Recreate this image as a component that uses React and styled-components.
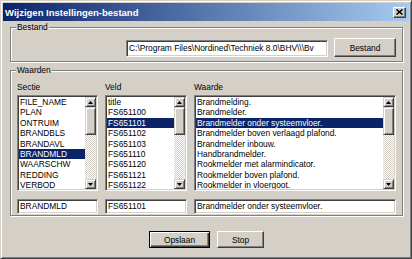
import styled, { createGlobalStyle } from 'styled-components';

const GlobalStyle = createGlobalStyle`
  body {
    margin: 0;
    background: #d4d0c8;
  }
`;

const secties = ['FILE_NAME', 'PLAN', 'ONTRUIM', 'BRANDBLS', 'BRANDAVL', 'BRANDMLD', 'WAARSCHW', 'REDDING', 'VERBOD'];
const velden = ['title', 'FS651100', 'FS651101', 'FS651102', 'FS651103', 'FS651110', 'FS651120', 'FS651121', 'FS651122'];
const waarden = [
  'Brandmelding.',
  'Brandmelder.',
  'Brandmelder onder systeemvloer.',
  'Brandmelder boven verlaagd plafond.',
  'Brandmelder inbouw.',
  'Handbrandmelder.',
  'Rookmelder met alarmindicator.',
  'Rookmelder boven plafond.',
  'Rookmelder in vloergoot.',
];

function Arrow({ down }) {
  return (
    <svg width="5" height="3" viewBox="0 0 5 3">
      <polygon points={down ? '0,0 5,0 2.5,3' : '0,3 5,3 2.5,0'} fill="#000" />
    </svg>
  );
}

function ListBox({ items, selected }) {
  return (
    <List>
      <Items>
        {items.map((item, i) => (
          <Item key={item} $selected={i === selected}>
            {item}
          </Item>
        ))}
      </Items>
      <ScrollBar>
        <ScrollButton>
          <Arrow />
        </ScrollButton>
        <Thumb />
        <Track />
        <ScrollButton>
          <Arrow down />
        </ScrollButton>
      </ScrollBar>
    </List>
  );
}

export default function App() {
  return (
    <>
      <GlobalStyle />
      <Window>
        <TitleBar>
          <Title>Wijzigen Instellingen-bestand</Title>
          <CloseButton>
            <svg width="7" height="6" viewBox="0 0 7 6">
              <path d="M0.5 0.5 L6.5 5.5 M6.5 0.5 L0.5 5.5" stroke="#000" strokeWidth="1.6" />
            </svg>
          </CloseButton>
        </TitleBar>
        <Body>
          <Group $padTop={5} $padBottom={4}>
            <Legend>Bestand</Legend>
            <FileRow>
              <TextField $width={202} $height={17}>
                C:\Program Files\Nordined\Techniek 8.0\BHV\\\Bv
              </TextField>
              <Button $width={62} $height={19}>Bestand</Button>
            </FileRow>
          </Group>
          <Group $top={2} $padTop={5} $padBottom={1}>
            <Legend>Waarden</Legend>
            <Columns>
              <Label>Sectie</Label>
              <Label>Veld</Label>
              <Label>Waarde</Label>
              <ListBox items={secties} selected={5} />
              <ListBox items={velden} selected={2} />
              <ListBox items={waarden} selected={2} />
              <TextField $height={15}>BRANDMLD</TextField>
              <TextField $height={15}>FS651101</TextField>
              <TextField $height={15}>Brandmelder onder systeemvloer.</TextField>
            </Columns>
          </Group>
          <ButtonRow>
            <Button $width={61} $height={17} $default>Opslaan</Button>
            <Button $width={47} $height={17}>Stop</Button>
          </ButtonRow>
        </Body>
      </Window>
    </>
  );
}

const Window = styled.div`
  width: 412px;
  height: 259px;
  box-sizing: border-box;
  background: #d4d0c8;
  border: 1px solid;
  border-color: #d4d0c8 #404040 #404040 #d4d0c8;
  box-shadow: inset 1px 1px #fff, inset -1px -1px #808080;
  padding: 2px;
  display: flex;
  flex-direction: column;
  font-family: 'Liberation Sans', Arial, sans-serif;
  font-size: 8.4px;
  color: #000;
`;

const TitleBar = styled.div`
  height: 18px;
  flex: none;
  display: flex;
  align-items: center;
  justify-content: space-between;
  padding: 0 3px 0 2px;
  background: linear-gradient(to right, #0a246a, #a6caf0);
`;

const Title = styled.div`
  color: #fff;
  font-weight: bold;
  font-size: 9.5px;
`;

const CloseButton = styled.div`
  width: 13px;
  height: 11px;
  box-sizing: border-box;
  display: flex;
  align-items: center;
  justify-content: center;
  background: #d4d0c8;
  border: 1px solid;
  border-color: #fff #404040 #404040 #fff;
  box-shadow: inset -1px -1px #808080;
`;

const Body = styled.div`
  flex: 1;
  display: flex;
  flex-direction: column;
  padding: 0 6px 0 7px;
`;

const Group = styled.fieldset`
  margin: ${(p) => p.$top || 0}px 0 0;
  padding: ${(p) => p.$padTop}px 6px ${(p) => p.$padBottom}px;
  border: 1px solid #808080;
  box-shadow: 1px 1px 0 #fff, inset 1px 1px 0 #fff;
  min-width: 0;
`;

const Legend = styled.legend`
  padding: 0 1px;
  margin-left: -1px;
  line-height: 12px;
  background: #d4d0c8;
`;

const FileRow = styled.div`
  display: flex;
  justify-content: flex-end;
  align-items: flex-end;
  gap: 6px;
`;

const TextField = styled.div`
  width: ${(p) => (p.$width ? `${p.$width}px` : 'auto')};
  height: ${(p) => p.$height}px;
  box-sizing: border-box;
  background: #fff;
  border: 1px solid;
  border-color: #808080 #fff #fff #808080;
  box-shadow: inset 1px 1px #404040, inset -1px -1px #d4d0c8;
  padding: 0 2px;
  line-height: ${(p) => p.$height - 2}px;
  white-space: nowrap;
  overflow: hidden;
`;

const Button = styled.div`
  width: ${(p) => p.$width}px;
  height: ${(p) => p.$height}px;
  box-sizing: border-box;
  display: flex;
  align-items: center;
  justify-content: center;
  background: #d4d0c8;
  border: 1px solid;
  border-color: ${(p) => (p.$default ? '#000' : '#fff #404040 #404040 #fff')};
  box-shadow: ${(p) =>
    p.$default
      ? 'inset 1px 1px #fff, inset -1px -1px #404040, inset -2px -2px #808080'
      : 'inset -1px -1px #808080'};
`;

const Columns = styled.div`
  display: grid;
  grid-template-columns: 81px 82px 1fr;
  column-gap: 7px;

  & > :nth-child(n + 4) {
    margin-top: 2px;
  }
  & > :nth-child(n + 7) {
    margin-top: 8px;
  }
`;

const Label = styled.div`
  line-height: 12px;
  height: 12px;
`;

const List = styled.div`
  height: 96px;
  box-sizing: border-box;
  display: flex;
  background: #fff;
  border: 1px solid;
  border-color: #808080 #fff #fff #808080;
  box-shadow: inset 1px 1px #404040, inset -1px -1px #d4d0c8;
  padding: 1px;
  overflow: hidden;
`;

const Items = styled.div`
  flex: 1;
  min-width: 0;
  overflow: hidden;
`;

const Item = styled.div`
  line-height: 10.4px;
  height: 10.4px;
  padding-left: 1px;
  white-space: nowrap;
  background: ${(p) => (p.$selected ? '#0a246a' : 'transparent')};
  color: ${(p) => (p.$selected ? '#fff' : '#000')};
`;

const ScrollBar = styled.div`
  width: 11px;
  flex: none;
  display: flex;
  flex-direction: column;
`;

const ScrollButton = styled.div`
  height: 10px;
  flex: none;
  box-sizing: border-box;
  display: flex;
  align-items: center;
  justify-content: center;
  background: #d4d0c8;
  border: 1px solid;
  border-color: #d4d0c8 #404040 #404040 #d4d0c8;
  box-shadow: inset 1px 1px #fff, inset -1px -1px #808080;
`;

const Thumb = styled(ScrollButton)`
  height: 28px;
`;

const Track = styled.div`
  flex: 1;
  background: repeating-conic-gradient(#fff 0 25%, #d4d0c8 0 50%) 0 0 / 2px 2px;
`;

const ButtonRow = styled.div`
  display: flex;
  justify-content: center;
  gap: 7px;
  margin-top: 15px;
`;
